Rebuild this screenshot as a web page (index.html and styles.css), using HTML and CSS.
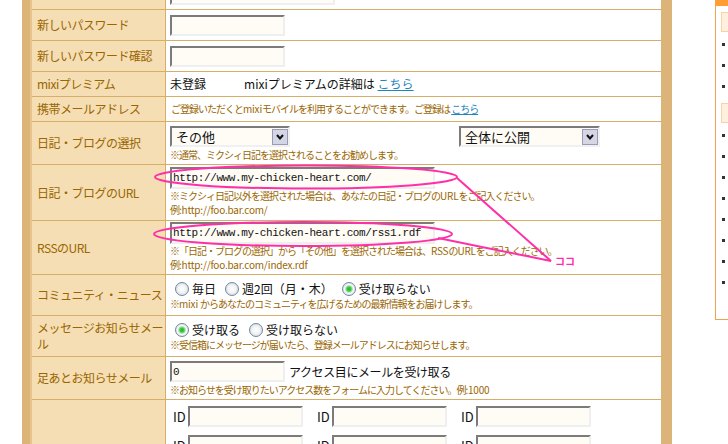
FILE: index.html
```html
<!DOCTYPE html>
<html lang="ja">
<head>
<meta charset="utf-8">
<title>設定変更</title>
<link rel="stylesheet" href="styles.css">
</head>
<body>
<div class="page">
  <div class="main">
    <div class="tbl">
      <div class="row r0"><div class="lab"></div><div class="val"><input class="txt w165" type="text"></div></div>
      <div class="row r1"><div class="lab">新しいパスワード</div><div class="val"><input class="txt w115" type="password"></div></div>
      <div class="row r2"><div class="lab">新しいパスワード確認</div><div class="val"><input class="txt w115" type="password"></div></div>
      <div class="row r3"><div class="lab">mixiプレミアム</div><div class="val"><div class="line"><span>未登録</span><span class="prem">mixiプレミアムの詳細は <a href="#">こちら</a></span></div></div></div>
      <div class="row r4"><div class="lab">携帯メールアドレス</div><div class="val"><p class="note">ご登録いただくと<span class="lat">mixi</span>モバイルを利用することができます。ご登録は <a href="#">こちら</a></p></div></div>
      <div class="row r5"><div class="lab">日記・ブログの選択</div><div class="val top4">
        <div class="line">
          <div class="sel w120"><span>その他</span><span class="arr"><svg width="8" height="6" viewBox="0 0 8 6"><polyline points="1,1 4,4.5 7,1" fill="none" stroke="#111" stroke-width="2"/></svg></span></div>
          <div class="sel w141 sel2"><span>全体に公開</span><span class="arr"><svg width="8" height="6" viewBox="0 0 8 6"><polyline points="1,1 4,4.5 7,1" fill="none" stroke="#111" stroke-width="2"/></svg></span></div>
        </div>
        <p class="note n14">※通常、ミクシィ日記を選択されることをお勧めします。</p>
      </div></div>
      <div class="row r6"><div class="lab">日記・ブログのURL</div><div class="val top2">
        <input class="txt url" type="text" value="http://www.my-chicken-heart.com/">
        <p class="note">※ミクシィ日記以外を選択された場合は、あなたの日記・ブログの<span class="lat">URL</span>をご記入ください。</p>
        <p class="note">例<span class="lat">:http://foo.bar.com/</span></p>
      </div></div>
      <div class="row r7"><div class="lab">RSSのURL</div><div class="val top1">
        <input class="txt url" type="text" value="http://www.my-chicken-heart.com/rss1.rdf">
        <p class="note">※「日記・ブログの選択」から「その他」を選択された場合は、<span class="lat">RSS</span>の<span class="lat">URL</span>をご記入ください。</p>
        <p class="note">例<span class="lat">:http://foo.bar.com/index.rdf</span></p>
      </div></div>
      <div class="row r8"><div class="lab">コミュニティ・ニュース</div><div class="val top6">
        <div class="line radios">
          <input class="rad" type="radio" name="cn"><span class="opt">毎日</span>
          <input class="rad" type="radio" name="cn"><span class="opt">週2回（月・木）</span>
          <input class="rad" type="radio" name="cn" checked><span class="opt">受け取らない</span>
        </div>
        <p class="note">※<span class="lat">mixi </span>からあなたのコミュニティを広げるための最新情報をお届けします。</p>
      </div></div>
      <div class="row r9"><div class="lab">メッセージお知らせメー<br>ル</div><div class="val top6">
        <div class="line radios">
          <input class="rad" type="radio" name="mm" checked><span class="opt">受け取る</span>
          <input class="rad" type="radio" name="mm"><span class="opt">受け取らない</span>
        </div>
        <p class="note">※受信箱にメッセージが届いたら、登録メールアドレスにお知らせします。</p>
      </div></div>
      <div class="row r10"><div class="lab">足あとお知らせメール</div><div class="val top4">
        <div class="line"><input class="txt w115" type="text" value="0"><span class="after">アクセス目にメールを受け取る</span></div>
        <p class="note n14">※お知らせを受け取りたいアクセス数をフォームに入力してください。例<span class="lat">:1000</span></p>
      </div></div>
      <div class="row r11"><div class="lab"></div><div class="val top6">
        <div class="line ids">
          <span class="idl">ID</span><input class="txt w115" type="text">
          <span class="idl">ID</span><input class="txt w115" type="text">
          <span class="idl">ID</span><input class="txt w115" type="text">
        </div>
        <div class="line ids">
          <span class="idl">ID</span><input class="txt w115" type="text">
          <span class="idl">ID</span><input class="txt w115" type="text">
          <span class="idl">ID</span><input class="txt w115" type="text">
        </div>
      </div></div>
    </div>
  </div>
  <aside class="side">
    <div class="side-bar"></div>
    <div class="side-head">プロフィール</div>
    <ul class="side-list"><li>設定</li><li>設定</li><li>設定</li></ul>
    <div class="side-head second">ご利用</div>
    <ul class="side-list"><li>設定</li><li>設定</li><li>設定</li><li>設定</li><li>設定</li><li>設定</li><li>設定</li><li>設定</li></ul>
  </aside>
</div>
<svg class="marks" width="728" height="444" viewBox="0 0 728 444">
  <ellipse cx="306" cy="177" rx="151" ry="11.5" fill="none" stroke="#ff2fa8" stroke-width="2"/>
  <ellipse cx="303" cy="234" rx="149" ry="12" fill="none" stroke="#ff2fa8" stroke-width="2"/>
  <line x1="457" y1="178" x2="551" y2="261" stroke="#ff2fa8" stroke-width="2"/>
  <line x1="438" y1="238" x2="551" y2="261" stroke="#ff2fa8" stroke-width="2"/>
  <text x="555" y="265" class="koko">ココ</text>
</svg>
</body>
</html>
```

FILE: styles.css
```css
* { box-sizing: border-box; }
html, body { margin: 0; padding: 0; background: #fff; overflow: hidden; }
body {
  width: 728px;
  height: 444px;
  position: relative;
  font-family: "Noto Sans CJK JP", sans-serif;
  font-size: 12px;
  color: #111;
}
p { margin: 0; }
a { color: #1f86bd; text-decoration: underline; }

.page { display: flex; align-items: flex-start; }

.main {
  margin: -21px 0 0 22px;
  width: 650px;
  flex: none;
  border-left: 8px solid #dcb479;
  border-right: 11px solid #dcb479;
}
.tbl { border-left: 2px solid #e6c48c; }

.row { display: flex; border-bottom: 1px solid #d7ae68; }
.r0 { height: 31px; }
.r1, .r2 { height: 31px; }
.r3, .r4 { height: 25px; }
.r5 { height: 43px; }
.r6 { height: 56px; }
.r7 { height: 54px; }
.r8, .r9 { height: 41px; }
.r10 { height: 43px; }
.r11 { height: 90px; }

.lab {
  width: 134px;
  flex: none;
  background: #f5deb4;
  border-right: 1px solid #d7ae68;
  color: #996600;
  font-size: 12px;
  letter-spacing: -0.5px;
  line-height: 16px;
  padding-left: 5px;
  display: flex;
  align-items: center;
}

.val {
  flex: 1;
  padding-left: 4px;
  display: flex;
  flex-direction: column;
  justify-content: center;
  line-height: 16px;
}
.val.top1, .val.top2, .val.top4, .val.top6 { justify-content: flex-start; }
.top1 { padding-top: 1px; }
.top2 { padding-top: 2px; }
.top4 { padding-top: 4px; }
.top6 { padding-top: 6px; }

.line { display: flex; align-items: center; }
.prem { margin-left: 38px; }

.note {
  font-size: 10px;
  letter-spacing: -1px;
  line-height: 14px;
  color: #996600;
  white-space: nowrap;
}
.note .lat { letter-spacing: -0.2px; }
.note.n14 { margin-top: 1px; }
.r4 .note { padding-left: 1px; }

.txt {
  height: 21px;
  margin: 0;
  padding: 0 1px;
  border: 2px solid;
  border-color: #7b7b7b #efefef #efefef #7b7b7b;
  background: #fffbf5;
  font-family: "Liberation Mono", monospace;
  font-size: 11px;
  letter-spacing: -0.4px;
  color: #111;
  outline: none;
}
.w115 { width: 115px; }
.w165 { width: 165px; }
.url { width: 265px; height: 22px; }

.sel {
  display: flex;
  align-items: center;
  height: 21px;
  border: 2px solid;
  border-color: #7b7b7b #f0f0f0 #f0f0f0 #7b7b7b;
  background: #fffbf5;
  padding-left: 4px;
  font-size: 13px;
}
.w120 { width: 120px; }
.w141 { width: 141px; }
.sel2 { margin-left: 169px; }
.arr {
  margin-left: auto;
  width: 16px;
  height: 16px;
  border: 1px solid #9a9ab4;
  background: #d4d6e6;
  display: flex;
  align-items: center;
  justify-content: center;
}

.radios { font-size: 12px; }
.rad {
  appearance: none;
  -webkit-appearance: none;
  width: 14px;
  height: 14px;
  margin: 0 3px 0 0;
  border-radius: 50%;
  border: 1px solid #6b88a6;
  background: radial-gradient(circle, #ffffff 0, #f3f3f3 45%, #c9ced6 100%);
  flex: none;
}
.rad:first-child { margin-left: 5px; }
.rad:checked {
  background: radial-gradient(circle, #22b52e 0, #3cc846 2px, #b6e8b6 3.5px, #ffffff 4.5px, #eeeeee 60%, #c9ced6 100%);
}
.opt { margin-right: 9px; }

.after { margin-left: 4px; font-size: 12px; letter-spacing: -0.4px; }

.ids { margin-bottom: 8px; }
.idl {
  width: 15px;
  margin-left: 3px;
  font-size: 13px;
  flex: none;
}
.idl ~ .idl { margin-left: 14px; }

.side {
  margin-left: 43px;
  width: 40px;
  height: 320px;
  flex: none;
  border-left: 1px solid #f0a24e;
  border-bottom: 1px solid #f0a24e;
  overflow: hidden;
}
.side-bar { height: 6px; background: #ff9c32; }
.side-head {
  margin: 6px 0 0 5px;
  height: 20px;
  width: 60px;
  background: #fdf0de;
  border: 1px solid #f8d3a6;
  color: #f08a20;
  font-size: 12px;
  line-height: 18px;
  padding-left: 5px;
  white-space: nowrap;
  overflow: hidden;
}
.side-list { list-style: none; margin: 2px 0 0; padding: 0; }
.side-list li {
  height: 21px;
  display: flex;
  align-items: center;
  padding-left: 6px;
  font-size: 12px;
  white-space: nowrap;
  color: #333;
}
.side-list li::before {
  content: "";
  width: 3px;
  height: 3px;
  margin-right: 8px;
  background: #333;
  flex: none;
}

.marks { position: absolute; left: 0; top: 0; pointer-events: none; }
.koko {
  fill: #ff2fa8;
  font-family: "Noto Sans CJK JP", sans-serif;
  font-size: 10px;
  font-weight: bold;
}
```
